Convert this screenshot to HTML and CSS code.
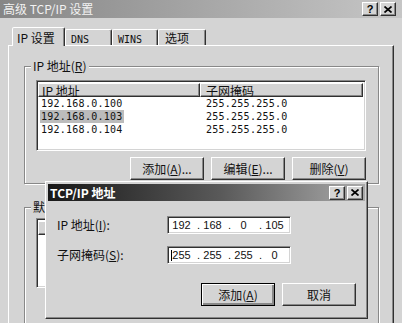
FILE: index.html
```html
<!DOCTYPE html>
<html lang="zh-CN">
<head>
    <meta charset="UTF-8">
    <title>高级 TCP/IP 设置</title>
    <link rel="stylesheet" href="styles.css">
</head>
<body>
    <div class="window">
        <div class="titlebar">
            <span class="title">高级 TCP/IP 设置</span>
            <div class="cap-btns">
                <span class="cap-btn">?</span>
                <span class="cap-btn"><svg width="8" height="7" viewBox="0 0 8 7"><path d="M0.5 0.5 L7.5 6.5 M7.5 0.5 L0.5 6.5" stroke="#000" stroke-width="1.7"/></svg></span>
            </div>
        </div>

        <div class="tabs">
            <div class="tab active">IP 设置</div>
            <div class="tab tab-dns"><span class="en">DNS</span></div>
            <div class="tab tab-wins"><span class="en">WINS</span></div>
            <div class="tab tab-opt">选项</div>
        </div>

        <div class="panel">
            <div class="group">
                <span class="group-label">IP 地址(<u>R</u>)</span>
                <div class="listbox">
                    <div class="list-header">
                        <span class="hcol hcol-ip">IP 地址</span>
                        <span class="hcol hcol-mask">子网掩码</span>
                    </div>
                    <div class="row"><span class="cell-ip"><span class="sel">192.168.0.100</span></span><span class="cell-mask">255.255.255.0</span></div>
                    <div class="row"><span class="cell-ip"><span class="sel selected">192.168.0.103</span></span><span class="cell-mask">255.255.255.0</span></div>
                    <div class="row"><span class="cell-ip"><span class="sel">192.168.0.104</span></span><span class="cell-mask">255.255.255.0</span></div>
                </div>
                <div class="btn-row">
                    <button class="btn">添加(<u>A</u>)...</button>
                    <button class="btn">编辑(<u>E</u>)...</button>
                    <button class="btn">删除(<u>V</u>)</button>
                </div>
            </div>

            <div class="group group-gw">
                <span class="group-label">默认网关(<u>F</u>):</span>
                <div class="listbox listbox-gw">
                    <div class="list-header">
                        <span class="hcol hcol-ip"></span>
                        <span class="hcol hcol-mask"></span>
                    </div>
                </div>
            </div>
        </div>

        <div class="dialog">
            <div class="dlg-titlebar">
                <span class="dlg-title">TCP/IP 地址</span>
                <div class="cap-btns">
                    <span class="cap-btn">?</span>
                    <span class="cap-btn"><svg width="8" height="7" viewBox="0 0 8 7"><path d="M0.5 0.5 L7.5 6.5 M7.5 0.5 L0.5 6.5" stroke="#000" stroke-width="1.7"/></svg></span>
                </div>
            </div>
            <div class="dlg-body">
                <div class="field-row">
                    <span class="field-label">IP 地址(<u>I</u>):</span>
                    <div class="ip-input"><span class="octet">192</span><span class="dot">.</span><span class="octet">168</span><span class="dot">.</span><span class="octet">0</span><span class="dot">.</span><span class="octet">105</span></div>
                </div>
                <div class="field-row field-row-mask">
                    <span class="field-label">子网掩码(<u>S</u>):</span>
                    <div class="ip-input"><span class="caret"></span><span class="octet">255</span><span class="dot">.</span><span class="octet">255</span><span class="dot">.</span><span class="octet">255</span><span class="dot">.</span><span class="octet">0</span></div>
                </div>
                <div class="dlg-buttons">
                    <button class="btn btn-default">添加(<u>A</u>)</button>
                    <button class="btn">取消</button>
                </div>
            </div>
        </div>
    </div>
</body>
</html>
```

FILE: styles.css
```css
body {
    margin: 0;
    background: #d4d4d4;
    font-family: "Noto Sans CJK SC", sans-serif;
    font-size: 12px;
    color: #111;
}

.window {
    position: relative;
    width: 402px;
    height: 323px;
    overflow: hidden;
    background: #d4d4d4;
}

/* title bars */
.titlebar {
    height: 18px;
    display: flex;
    align-items: center;
    justify-content: space-between;
    padding: 0 6px 0 3px;
    background: linear-gradient(to right, #868686, #c6c6c6);
}

.title {
    color: #f2f2f2;
    font-size: 12px;
    line-height: 14px;
}

.cap-btns {
    display: flex;
    gap: 2px;
}

.cap-btn {
    width: 16px;
    height: 14px;
    box-sizing: border-box;
    display: flex;
    align-items: center;
    justify-content: center;
    background: #d4d4d4;
    border: 1px solid;
    border-color: #fff #303030 #303030 #fff;
    box-shadow: inset -1px -1px 0 #888;
    font: bold 11px "Liberation Sans", sans-serif;
    color: #000;
}

/* tabs */
.tabs {
    display: flex;
    align-items: flex-end;
    height: 18px;
    margin: 9px 0 0 12px;
}

.tab {
    box-sizing: border-box;
    height: 16px;
    padding-left: 5px;
    line-height: 15px;
    border: 1px solid;
    border-bottom: none;
    border-color: #fff #303030 transparent #fff;
    box-shadow: inset -1px 0 0 #888;
    border-radius: 2px 2px 0 0;
}

.tab.active {
    position: relative;
    z-index: 1;
    width: 53px;
    height: 19px;
    margin-bottom: -1px;
    padding-left: 4px;
    line-height: 19px;
    background: #d4d4d4;
}

.tab-dns { width: 47px; }
.tab-wins { width: 46px; }
.tab-opt { width: 48px; padding-left: 6px; }

.en {
    font-family: "DejaVu Sans Mono", monospace;
    font-size: 10px;
}

/* tab page */
.panel {
    height: 400px;
    margin: 0 8px;
    border: 1px solid;
    border-color: #fff #303030 #303030 #fff;
    box-shadow: inset -1px 0 0 #888;
    padding: 20px 0 0 15px;
}

.group {
    width: 355px;
    box-sizing: border-box;
    border: 1px solid #888;
    box-shadow: 1px 1px 0 #fff, inset 1px 1px 0 #fff;
    padding-bottom: 3px;
}

.group-label {
    display: table;
    margin: -8px 0 0 6px;
    padding: 0 2px;
    line-height: 14px;
    background: #d4d4d4;
}

.group-gw {
    margin-top: 23px;
    height: 200px;
}

.listbox {
    width: 330px;
    height: 71px;
    box-sizing: border-box;
    margin: 7px 0 0 11px;
    background: #fff;
    border: 1px solid;
    border-color: #888 #fff #fff #888;
    box-shadow: inset 1px 1px 0 #303030, inset -1px -1px 0 #d4d4d4;
    padding: 1px;
}

.listbox-gw {
    margin-top: 4px;
    height: 70px;
}

.list-header {
    display: flex;
    height: 14px;
    margin-top: 1px;
}

.hcol {
    box-sizing: border-box;
    height: 14px;
    line-height: 13px;
    padding-left: 3px;
    background: #d4d4d4;
    border: 1px solid;
    border-color: #fff #303030 #303030 #fff;
    box-shadow: inset -1px -1px 0 #888;
}

.hcol-ip { width: 162px; }
.hcol-mask { width: 163px; padding-left: 5px; }

.row {
    display: flex;
    height: 13px;
    line-height: 13px;
    font-family: "DejaVu Sans Mono", monospace;
    font-size: 10px;
    letter-spacing: 0.25px;
}

.row:first-of-type { margin-top: 1px; }

.cell-ip {
    width: 162px;
    padding-left: 2px;
    box-sizing: border-box;
}

.cell-mask { padding-left: 6px; }

.sel { padding: 0 1px; display: inline-block; }
.sel.selected { background: #bcbcbc; }

/* buttons */
.btn-row {
    display: flex;
    justify-content: flex-end;
    gap: 7px;
    width: 330px;
    margin: 6px 0 0 11px;
}

.btn {
    width: 74px;
    height: 23px;
    box-sizing: border-box;
    padding: 0;
    background: #d4d4d4;
    border: 1px solid;
    border-color: #fff #303030 #303030 #fff;
    box-shadow: inset -1px -1px 0 #888;
    font-family: "Noto Sans CJK SC", sans-serif;
    font-size: 12px;
    color: #111;
}

.btn-default {
    border: 1px solid #000;
    box-shadow: inset 1px 1px 0 #fff, inset -2px -2px 0 #888, inset -1px -1px 0 #303030;
}

/* overlay dialog */
.dialog {
    position: absolute;
    left: 45px;
    top: 181px;
    width: 323px;
    height: 138px;
    box-sizing: border-box;
    background: #d4d4d4;
    border: 1px solid;
    border-color: #fff #303030 #303030 #fff;
    box-shadow: inset -1px -1px 0 #888;
    padding: 2px;
}

.dlg-titlebar {
    height: 17px;
    display: flex;
    align-items: center;
    justify-content: space-between;
    padding: 0 2px 0 2px;
    background: linear-gradient(to right, #181818, #5a5a5a 55%, #aaa);
}

.dlg-title {
    color: #fff;
    font-weight: bold;
    line-height: 14px;
}

.dlg-body {
    padding: 15px 9px 0 9px;
}

.field-row {
    display: flex;
    align-items: center;
    height: 18px;
}

.field-row-mask {
    margin-top: 12px;
}

.field-label {
    width: 110px;
    line-height: 14px;
}

.ip-input {
    width: 124px;
    height: 18px;
    box-sizing: border-box;
    display: flex;
    align-items: center;
    padding-left: 3px;
    background: #fff;
    border: 1px solid;
    border-color: #888 #fff #fff #888;
    box-shadow: inset 1px 1px 0 #303030, inset -1px -1px 0 #d4d4d4;
    font-family: "Liberation Sans", sans-serif;
    font-size: 11px;
    line-height: 13px;
    color: #111;
}

.octet {
    width: 21px;
    text-align: center;
}

.dot {
    width: 10px;
    text-align: right;
    padding-right: 2px;
    box-sizing: border-box;
}

.caret {
    width: 1px;
    height: 11px;
    margin-right: -1px;
    background: #000;
}

.dlg-buttons {
    display: flex;
    justify-content: flex-end;
    gap: 7px;
    margin-top: 19px;
}
```
